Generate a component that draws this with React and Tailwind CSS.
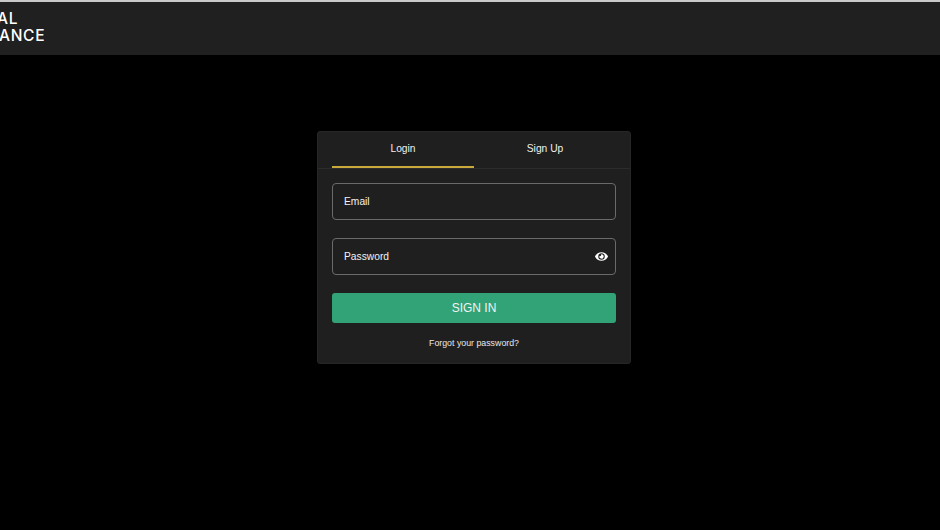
import { FaEye } from 'react-icons/fa';

const Field = ({ label, type, children, className }) => (
  <div className={`relative h-[37px] ${className || ''}`}>
    <input
      type={type}
      placeholder={label}
      className="block h-full w-full rounded-[4px] border border-[#6a6a6a] bg-transparent px-[11px] text-[10.25px] text-white outline-none placeholder:text-[#f2f2f2]"
    />
    {children}
  </div>
);

const App = () => {
  return (
    <div className="flex h-[530px] w-[940px] flex-col overflow-hidden bg-black font-['Liberation_Sans',Arial,sans-serif]">
      <header className="h-[55px] shrink-0 border-t-2 border-[#c9c9c9] bg-[#202020]">
        <div className="pt-[9px] font-['Inter',sans-serif] text-[15.5px] leading-[16.5px] font-medium tracking-[0.7px] text-white">
          <div className="-ml-[3px]">AL</div>
          <div className="-ml-px">ANCE</div>
        </div>
      </header>

      <main className="pl-[317px] pt-[76px]">
        <div className="h-[233px] w-[314px] rounded-[3px] border border-[#262626] bg-[#1f1f1f]">
          <div className="flex h-[37px] border-b border-[#2c2c2c] px-[14px]">
            <button className="-mb-px h-[36px] flex-1 border-b-2 border-[#c9a93b] text-[10.25px] text-[#f0f0f0]">
              Login
            </button>
            <button className="h-[36px] flex-1 pb-[3px] text-[10.25px] text-[#f0f0f0]">Sign Up</button>
          </div>

          <div className="px-[14px] pt-[14px]">
            <Field label="Email" type="email" />
            <Field label="Password" type="password" className="mt-[18px]">
              <FaEye size={13} color="#ffffff" className="absolute right-[8px] top-[12px]" />
            </Field>
            <button className="mt-[18px] block h-[30px] w-full rounded-[3px] bg-[#31a376] text-[12px] text-[#f2f2f2]">
              SIGN IN
            </button>
            <p className="mt-[13px] text-center text-[8.8px] leading-[14px] text-[#e8e8e8]">
              Forgot your password?
            </p>
          </div>
        </div>
      </main>
    </div>
  );
};

export default App;
